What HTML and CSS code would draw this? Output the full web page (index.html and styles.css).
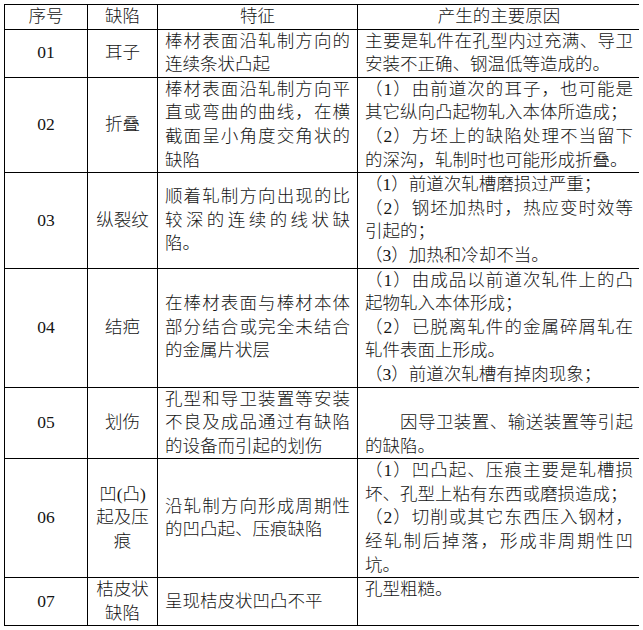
FILE: index.html
```html
<!DOCTYPE html>
<html lang="zh-CN">
<head>
<meta charset="utf-8">
<title>棒材表面缺陷</title>
<link rel="stylesheet" href="styles.css">
</head>
<body>
<table class="defects">
  <colgroup>
    <col class="c-no">
    <col class="c-name">
    <col class="c-feat">
    <col class="c-cause">
  </colgroup>
  <thead>
    <tr>
      <th>序号</th>
      <th>缺陷</th>
      <th>特征</th>
      <th>产生的主要原因</th>
    </tr>
  </thead>
  <tbody>
    <tr>
      <td class="no">01</td>
      <td class="name">耳子</td>
      <td class="feat">棒材表面沿轧制方向的连续条状凸起</td>
      <td class="cause">主要是轧件在孔型内过充满、导卫安装不正确、钢温低等造成的。</td>
    </tr>
    <tr>
      <td class="no">02</td>
      <td class="name">折叠</td>
      <td class="feat">棒材表面沿轧制方向平直或弯曲的曲线，在横截面呈小角度交角状的缺陷</td>
      <td class="cause"><p>（1）由前道次的耳子，也可能是其它纵向凸起物轧入本体所造成；</p><p>（2）方坯上的缺陷处理不当留下的深沟，轧制时也可能形成折叠。</p></td>
    </tr>
    <tr>
      <td class="no">03</td>
      <td class="name">纵裂纹</td>
      <td class="feat">顺着轧制方向出现的比较深的连续的线状缺陷。</td>
      <td class="cause"><p>（1）前道次轧槽磨损过严重；</p><p>（2）钢坯加热时，热应变时效等引起的；</p><p>（3）加热和冷却不当。</p></td>
    </tr>
    <tr>
      <td class="no">04</td>
      <td class="name">结疤</td>
      <td class="feat">在棒材表面与棒材本体部分结合或完全未结合的金属片状层</td>
      <td class="cause"><p>（1）由成品以前道次轧件上的凸起物轧入本体形成；</p><p>（2）已脱离轧件的金属碎屑轧在轧件表面上形成。</p><p>（3）前道次轧槽有掉肉现象；</p></td>
    </tr>
    <tr>
      <td class="no">05</td>
      <td class="name">划伤</td>
      <td class="feat">孔型和导卫装置等安装不良及成品通过有缺陷的设备而引起的划伤</td>
      <td class="cause cause-bottom"><p class="indent">因导卫装置、输送装置等引起的缺陷。</p></td>
    </tr>
    <tr>
      <td class="no">06</td>
      <td class="name">凹(凸)起及压痕</td>
      <td class="feat">沿轧制方向形成周期性的凹凸起、压痕缺陷</td>
      <td class="cause"><p>（1）凹凸起、压痕主要是轧槽损坏、孔型上粘有东西或磨损造成；</p><p>（2）切削或其它东西压入钢材，经轧制后掉落，形成非周期性凹坑。</p></td>
    </tr>
    <tr>
      <td class="no">07</td>
      <td class="name">桔皮状缺陷</td>
      <td class="feat">呈现桔皮状凹凸不平</td>
      <td class="cause">孔型粗糙。</td>
    </tr>
  </tbody>
</table>
</body>
</html>
```
FILE: styles.css
```css
html, body {
  background: #ffffff;
}

body {
  margin: 4px;
  font-family: "Liberation Serif", "Noto Sans CJK SC", sans-serif;
  font-size: 17.5px;
  line-height: 23.6px;
  color: #141414;
  text-spacing-trim: space-all;
}

.defects {
  border-collapse: collapse;
  table-layout: fixed;
  width: 636px;
}

.c-no { width: 83px; }
.c-name { width: 70px; }
.c-feat { width: 200px; }
.c-cause { width: 283px; }

.defects th,
.defects td {
  border: 1px solid #000;
  padding: 0 7px;
  font-weight: 300;
}

.defects th {
  text-align: center;
  vertical-align: middle;
}

.defects td p {
  margin: 0;
}

.no,
.name {
  text-align: center;
  vertical-align: middle;
}

.defects .no {
  font-weight: normal;
}

.feat {
  text-align: justify;
  vertical-align: middle;
}

.cause {
  text-align: justify;
  vertical-align: top;
}

.cause-bottom {
  vertical-align: bottom;
}

.indent {
  text-indent: 2em;
}
```
